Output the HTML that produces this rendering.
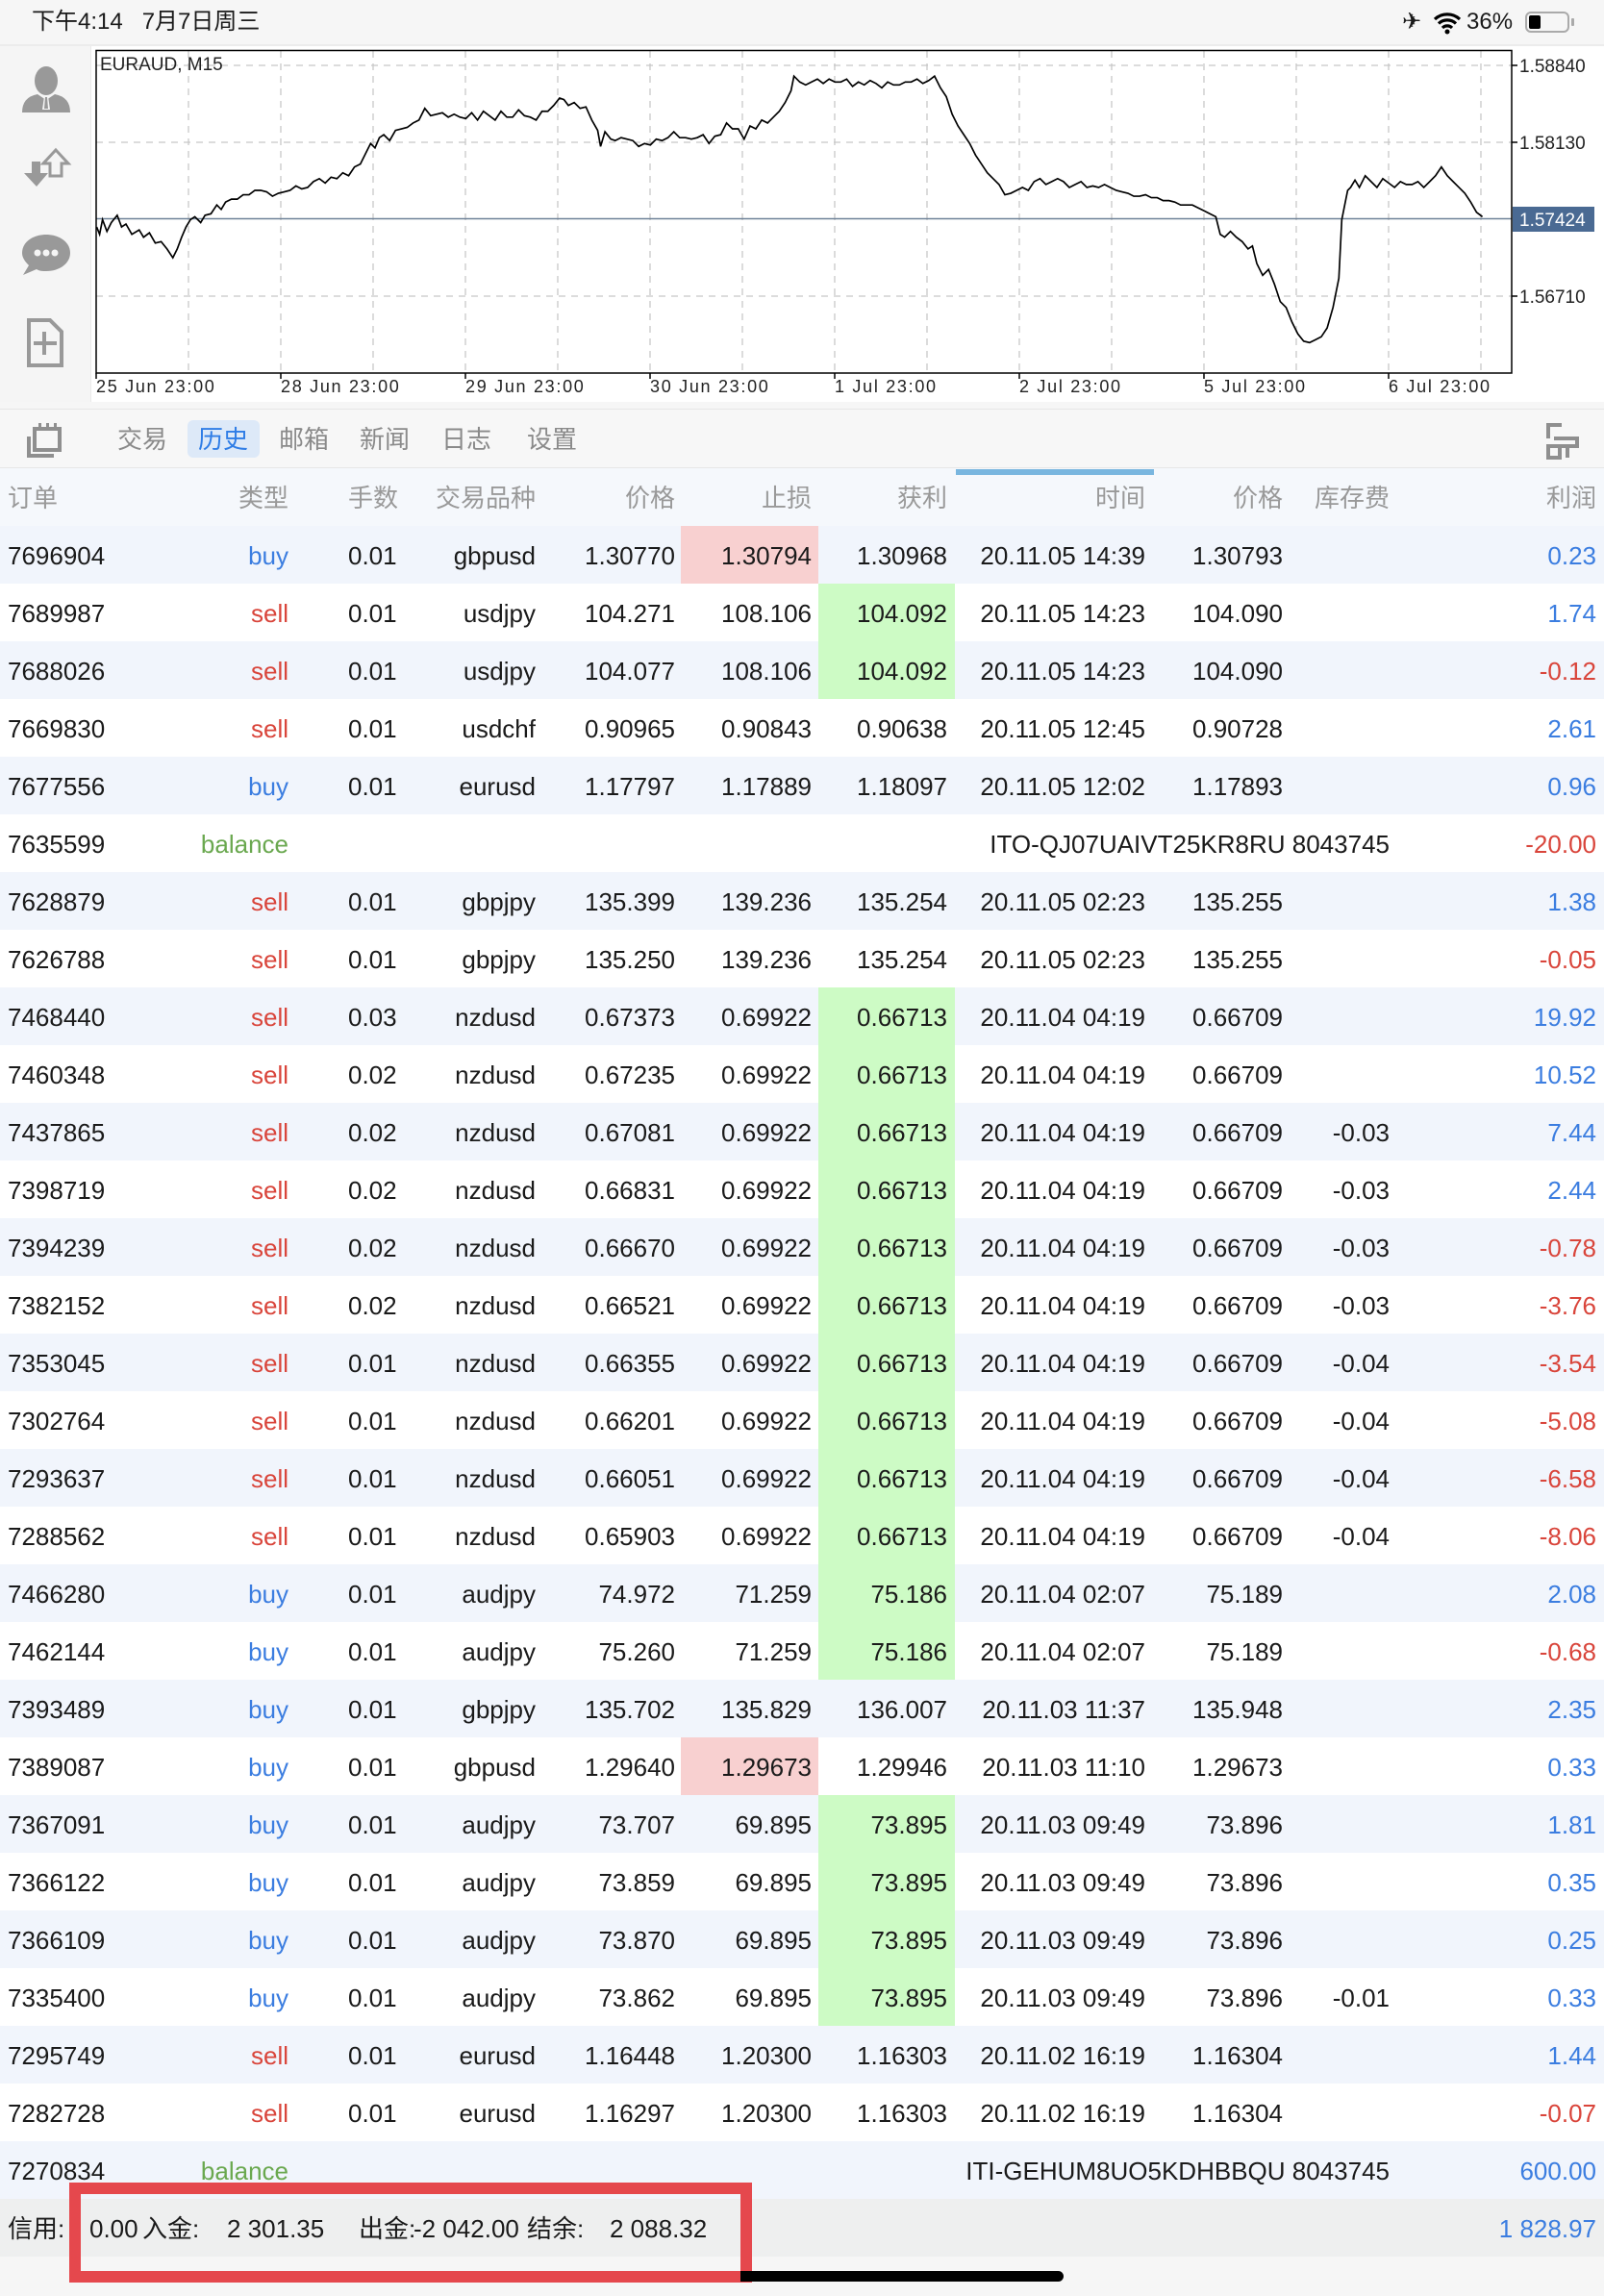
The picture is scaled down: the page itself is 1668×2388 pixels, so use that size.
<!DOCTYPE html>
<html><head><meta charset="utf-8"><style>
*{margin:0;padding:0;box-sizing:border-box}
body{width:1668px;height:2388px;position:relative;overflow:hidden;background:#f6f6f6;font-family:"Liberation Sans","Noto Sans CJK SC",sans-serif;color:#1a1a1a}
.abs{position:absolute}
#status{left:0;top:0;width:1668px;height:48px;background:#f6f6f6;border-bottom:2px solid #ececec}
#side{left:0;top:48px;width:95px;height:370px;background:#f5f5f5;border-right:1px solid #eaeaea}
#chartbg{left:95px;top:48px;width:1573px;height:370px;background:#fff}
#tabs{left:0;top:425px;width:1668px;height:62px;background:#f7f7f7;border-top:1px solid #e6e6e6;border-bottom:1px solid #e6e6e6}
.tab{position:absolute;top:14px;font-size:26px;color:#8a8a8a;line-height:34px}
#hdr{left:0;top:487px;width:1668px;height:60px;background:#f5f8fc}
.r{position:absolute;left:0;width:1668px;height:60px;font-size:26px;line-height:62px}
.r.b{background:#f1f5fc}.r.w{background:#fff}
.r i{position:absolute;font-style:normal;top:0;white-space:nowrap}
.c0{left:8px}.c1{right:1368px}.c2{left:362px}.c3{right:1111px}.c4{right:966px}.c5{right:824px}.c6{right:683px}.c7{right:477px}.c8{right:334px}.c9{right:223px}.c10{right:8px}
.buy{color:#3b7de0}.sell{color:#d9453b}.bal{color:#6aa84f}.pos{color:#3b7de0}.neg{color:#d9453b}
.hp,.hg{position:absolute;top:0;height:60px}
.hp{left:708px;width:143px;background:#f8d0d0}
.hg{left:851px;width:142px;background:#cdfbc5}
#hdr i{position:absolute;font-style:normal;font-size:26px;line-height:62px;color:#999}
</style></head><body>
<div id="status" class="abs">
<div class="abs" style="left:33px;top:8px;font-size:24px;line-height:30px">下午4:14&nbsp;&nbsp;&nbsp;7月7日周三</div>
<div class="abs" style="left:1458px;top:8px;font-size:24px;line-height:30px">✈</div>
<svg class="abs" style="left:1490px;top:12px" width="30" height="24" viewBox="0 0 30 24"><path d="M2 8a19 19 0 0 1 26 0M6 12.5a13 13 0 0 1 18 0M10 17a7 7 0 0 1 10 0" stroke="#000" stroke-width="3.2" fill="none"/><circle cx="15" cy="21" r="2.5"/></svg>
<div class="abs" style="left:1525px;top:8px;font-size:24px;line-height:30px">36%</div>
<div class="abs" style="left:1586px;top:12px;width:46px;height:22px;border:2px solid #aaa;border-radius:6px"><div style="position:absolute;left:2px;top:2px;width:12px;height:14px;background:#000;border-radius:2px"></div></div>
<div class="abs" style="left:1634px;top:19px;width:3px;height:8px;background:#aaa;border-radius:1px"></div>
</div>
<div id="side" class="abs"></div>
<div id="chartbg" class="abs"></div>
<svg class="abs" style="left:0;top:0" width="95" height="420" viewBox="0 0 95 420">
<g fill="#999">
<ellipse cx="48" cy="84" rx="12" ry="15"/><path d="M23 117q0-16 16-19l9 6 9-6q16 3 16 19z"/><path d="M46 100h4l2 14h-8z" fill="#f5f5f5"/><path d="M47 101h2l1 12h-4z"/>
<path d="M25 180h8v-12h9v12h8l-12 14z"/><path d="M58 156l13 14h-7v13h-12v-13h-7z" fill="none" stroke="#999" stroke-width="3"/>
<path d="M48 244c14 0 25 8 25 19s-11 19-25 19c-4 0-7 0-10-2l-14 6 6-10c-4-4-7-8-7-13 0-11 11-19 25-19z"/>
<path d="M30 333h22l12 12v35h-34z" fill="none" stroke="#999" stroke-width="4"/><path d="M46 345v24M35 357h24" stroke="#999" stroke-width="4"/>
</g>
<g fill="#f5f5f5"><circle cx="39" cy="263" r="3.5"/><circle cx="48" cy="263" r="3.5"/><circle cx="57" cy="263" r="3.5"/></g>
</svg>
<svg class="abs" style="left:0;top:0" width="1668" height="420" viewBox="0 0 1668 420">
<g stroke="#c8c8c8" stroke-width="1.3" stroke-dasharray="7,6">
<line x1="100" y1="68" x2="1572" y2="68"/><line x1="100" y1="148" x2="1572" y2="148"/><line x1="100" y1="308" x2="1572" y2="308"/>
<line x1="196" y1="53" x2="196" y2="388"/><line x1="292" y1="53" x2="292" y2="388"/><line x1="388" y1="53" x2="388" y2="388"/><line x1="484" y1="53" x2="484" y2="388"/><line x1="580" y1="53" x2="580" y2="388"/><line x1="676" y1="53" x2="676" y2="388"/><line x1="772" y1="53" x2="772" y2="388"/><line x1="868" y1="53" x2="868" y2="388"/><line x1="964" y1="53" x2="964" y2="388"/><line x1="1060" y1="53" x2="1060" y2="388"/><line x1="1156" y1="53" x2="1156" y2="388"/><line x1="1252" y1="53" x2="1252" y2="388"/><line x1="1348" y1="53" x2="1348" y2="388"/><line x1="1444" y1="53" x2="1444" y2="388"/><line x1="1540" y1="53" x2="1540" y2="388"/>
</g>
<line x1="100" y1="227.5" x2="1572" y2="227.5" stroke="#6f8298" stroke-width="1.5"/>
<rect x="100" y="52.5" width="1472" height="335.5" fill="none" stroke="#000" stroke-width="1.5"/>
<g stroke="#000" stroke-width="1.5"><line x1="1572" y1="68" x2="1578" y2="68"/><line x1="1572" y1="148" x2="1578" y2="148"/><line x1="1572" y1="308" x2="1578" y2="308"/>
<line x1="100" y1="388" x2="100" y2="394"/><line x1="292" y1="388" x2="292" y2="394"/><line x1="484" y1="388" x2="484" y2="394"/><line x1="676" y1="388" x2="676" y2="394"/><line x1="868" y1="388" x2="868" y2="394"/><line x1="1060" y1="388" x2="1060" y2="394"/><line x1="1252" y1="388" x2="1252" y2="394"/><line x1="1444" y1="388" x2="1444" y2="394"/></g>
<rect x="1573" y="215" width="85" height="26" fill="#4a6a93"/>
<g font-family="Liberation Sans, sans-serif" font-size="19" fill="#222">
<text x="104" y="73">EURAUD, M15</text>
<text x="1580" y="75">1.58840</text><text x="1580" y="155">1.58130</text><text x="1580" y="235" fill="#fff">1.57424</text><text x="1580" y="315">1.56710</text>
<g font-size="18" letter-spacing="1.7"><text x="100" y="408">25 Jun 23:00</text><text x="292" y="408">28 Jun 23:00</text><text x="484" y="408">29 Jun 23:00</text><text x="676" y="408">30 Jun 23:00</text><text x="868" y="408">1 Jul 23:00</text><text x="1060" y="408">2 Jul 23:00</text><text x="1252" y="408">5 Jul 23:00</text><text x="1444" y="408">6 Jul 23:00</text></g>
</g>
</svg>
<svg class="abs" style="left:0;top:0" width="1668" height="2388" viewBox="0 0 1095 1568" preserveAspectRatio="none">
<polyline fill="none" stroke="#000" stroke-width="1.1" points="66,155 68,160 70,150 73,158 76,152 80,147 83,155 86,153 90,160 95,157 98,162 102,159 106,166 110,165 114,170 118,176 121,170 124,162 127,155 130,150 133,148 137,152 140,147 144,146 148,140 151,143 154,138 158,136 162,136 166,133 170,133 174,130 178,130 182,131 186,134 190,132 194,131 198,130 202,127 206,129 210,128 214,124 218,122 222,125 226,121 230,122 234,118 238,120 242,114 246,112 250,104 253,98 256,101 259,94 262,92 266,96 270,89 274,88 278,87 282,84 286,82 290,74 294,79 298,78 302,77 306,80 310,78 314,80 318,81 322,77 326,82 330,76 334,79 338,82 342,76 346,80 350,80 354,75 358,79 362,80 366,82 370,76 374,76 378,72 382,67 385,68 388,72 392,70 396,74 400,73 404,82 408,89 410,100 413,90 417,95 420,96 424,94 428,95 432,96 436,100 440,98 444,99 448,95 452,96 456,94 460,90 464,94 468,94 472,95 476,94 480,92 484,98 488,93 492,92 496,84 500,88 504,88 508,95 512,86 516,88 520,82 524,84 528,80 532,76 536,70 540,62 542,52 546,56 550,58 554,56 558,54 562,57 566,54 570,56 574,56 578,54 582,59 586,56 590,58 594,55 598,57 602,60 606,56 610,58 614,58 618,56 622,56 626,54 630,57 634,55 638,52 642,60 646,66 650,78 654,86 658,92 662,98 666,106 670,112 674,118 678,122 682,126 686,133 690,132 694,130 698,128 702,130 706,124 710,122 714,126 718,124 722,122 726,124 730,128 734,126 738,124 742,128 746,127 750,128 754,126 758,128 762,130 766,131 770,132 774,134 778,134 782,133 786,135 790,135 794,137 798,137 802,138 806,140 810,140 814,140 818,142 822,144 826,146 830,148 833,160 836,162 840,158 844,162 848,165 852,170 855,168 858,180 862,188 866,184 870,194 874,206 878,210 882,220 886,228 890,233 894,234 898,232 902,230 906,224 910,210 914,190 916,150 918,140 920,130 922,128 925,123 928,128 932,120 936,124 940,128 944,122 948,125 952,128 956,124 960,126 964,126 968,124 972,128 976,124 980,120 984,114 988,120 992,124 996,128 1000,132 1004,138 1008,145 1012,148"/>
</svg>
<div id="tabs" class="abs">
<svg class="abs" style="left:26px;top:12px" width="44" height="40" viewBox="0 0 44 40"><g fill="none" stroke="#8f8f8f" stroke-width="4"><path d="M10 8h26v22H10z"/><path d="M4 16v20h26"/></g><g fill="#8f8f8f"><rect x="14" y="2" width="3" height="8"/><rect x="22" y="2" width="3" height="8"/><rect x="30" y="2" width="3" height="8"/></g></svg>
<div class="abs" style="left:195px;top:11px;width:75px;height:39px;background:#dde9f8;border-radius:6px"></div>
<span class="tab" style="left:122px">交易</span>
<span class="tab" style="left:206px;color:#2f7de6">历史</span>
<span class="tab" style="left:290px">邮箱</span>
<span class="tab" style="left:374px">新闻</span>
<span class="tab" style="left:459px">日志</span>
<span class="tab" style="left:548px">设置</span>
<svg class="abs" style="left:1604px;top:12px" width="40" height="40" viewBox="0 0 40 40"><g fill="none" stroke="#8f8f8f" stroke-width="4"><path d="M6 18V4h14"/><path d="M6 26h12v12H6z"/><path d="M12 18h24v8H18"/><path d="M26 26v12"/></g></svg>
</div>
<div id="hdr" class="abs">
<div class="abs" style="left:994px;top:1px;width:206px;height:6px;background:#79b6df"></div>
<i style="left:8px">订单</i><i style="right:1368px">类型</i><i style="left:362px">手数</i><i style="right:1111px">交易品种</i><i style="right:966px">价格</i><i style="right:824px">止损</i><i style="right:683px">获利</i><i style="right:477px">时间</i><i style="right:334px">价格</i><i style="right:223px">库存费</i><i style="right:8px">利润</i>
</div>
<div class="r b" style="top:547px"><span class="hp"></span><i class="c0">7696904</i><i class="c1 buy">buy</i><i class="c2">0.01</i><i class="c3">gbpusd</i><i class="c4">1.30770</i><i class="c5">1.30794</i><i class="c6">1.30968</i><i class="c7">20.11.05 14:39</i><i class="c8">1.30793</i><i class="c10 pos">0.23</i></div>
<div class="r w" style="top:607px"><span class="hg"></span><i class="c0">7689987</i><i class="c1 sell">sell</i><i class="c2">0.01</i><i class="c3">usdjpy</i><i class="c4">104.271</i><i class="c5">108.106</i><i class="c6">104.092</i><i class="c7">20.11.05 14:23</i><i class="c8">104.090</i><i class="c10 pos">1.74</i></div>
<div class="r b" style="top:667px"><span class="hg"></span><i class="c0">7688026</i><i class="c1 sell">sell</i><i class="c2">0.01</i><i class="c3">usdjpy</i><i class="c4">104.077</i><i class="c5">108.106</i><i class="c6">104.092</i><i class="c7">20.11.05 14:23</i><i class="c8">104.090</i><i class="c10 neg">-0.12</i></div>
<div class="r w" style="top:727px"><i class="c0">7669830</i><i class="c1 sell">sell</i><i class="c2">0.01</i><i class="c3">usdchf</i><i class="c4">0.90965</i><i class="c5">0.90843</i><i class="c6">0.90638</i><i class="c7">20.11.05 12:45</i><i class="c8">0.90728</i><i class="c10 pos">2.61</i></div>
<div class="r b" style="top:787px"><i class="c0">7677556</i><i class="c1 buy">buy</i><i class="c2">0.01</i><i class="c3">eurusd</i><i class="c4">1.17797</i><i class="c5">1.17889</i><i class="c6">1.18097</i><i class="c7">20.11.05 12:02</i><i class="c8">1.17893</i><i class="c10 pos">0.96</i></div>
<div class="r w" style="top:847px"><i class="c0">7635599</i><i class="c1 bal">balance</i><i class="c9">ITO-QJ07UAIVT25KR8RU 8043745</i><i class="c10 neg">-20.00</i></div>
<div class="r b" style="top:907px"><i class="c0">7628879</i><i class="c1 sell">sell</i><i class="c2">0.01</i><i class="c3">gbpjpy</i><i class="c4">135.399</i><i class="c5">139.236</i><i class="c6">135.254</i><i class="c7">20.11.05 02:23</i><i class="c8">135.255</i><i class="c10 pos">1.38</i></div>
<div class="r w" style="top:967px"><i class="c0">7626788</i><i class="c1 sell">sell</i><i class="c2">0.01</i><i class="c3">gbpjpy</i><i class="c4">135.250</i><i class="c5">139.236</i><i class="c6">135.254</i><i class="c7">20.11.05 02:23</i><i class="c8">135.255</i><i class="c10 neg">-0.05</i></div>
<div class="r b" style="top:1027px"><span class="hg"></span><i class="c0">7468440</i><i class="c1 sell">sell</i><i class="c2">0.03</i><i class="c3">nzdusd</i><i class="c4">0.67373</i><i class="c5">0.69922</i><i class="c6">0.66713</i><i class="c7">20.11.04 04:19</i><i class="c8">0.66709</i><i class="c10 pos">19.92</i></div>
<div class="r w" style="top:1087px"><span class="hg"></span><i class="c0">7460348</i><i class="c1 sell">sell</i><i class="c2">0.02</i><i class="c3">nzdusd</i><i class="c4">0.67235</i><i class="c5">0.69922</i><i class="c6">0.66713</i><i class="c7">20.11.04 04:19</i><i class="c8">0.66709</i><i class="c10 pos">10.52</i></div>
<div class="r b" style="top:1147px"><span class="hg"></span><i class="c0">7437865</i><i class="c1 sell">sell</i><i class="c2">0.02</i><i class="c3">nzdusd</i><i class="c4">0.67081</i><i class="c5">0.69922</i><i class="c6">0.66713</i><i class="c7">20.11.04 04:19</i><i class="c8">0.66709</i><i class="c9">-0.03</i><i class="c10 pos">7.44</i></div>
<div class="r w" style="top:1207px"><span class="hg"></span><i class="c0">7398719</i><i class="c1 sell">sell</i><i class="c2">0.02</i><i class="c3">nzdusd</i><i class="c4">0.66831</i><i class="c5">0.69922</i><i class="c6">0.66713</i><i class="c7">20.11.04 04:19</i><i class="c8">0.66709</i><i class="c9">-0.03</i><i class="c10 pos">2.44</i></div>
<div class="r b" style="top:1267px"><span class="hg"></span><i class="c0">7394239</i><i class="c1 sell">sell</i><i class="c2">0.02</i><i class="c3">nzdusd</i><i class="c4">0.66670</i><i class="c5">0.69922</i><i class="c6">0.66713</i><i class="c7">20.11.04 04:19</i><i class="c8">0.66709</i><i class="c9">-0.03</i><i class="c10 neg">-0.78</i></div>
<div class="r w" style="top:1327px"><span class="hg"></span><i class="c0">7382152</i><i class="c1 sell">sell</i><i class="c2">0.02</i><i class="c3">nzdusd</i><i class="c4">0.66521</i><i class="c5">0.69922</i><i class="c6">0.66713</i><i class="c7">20.11.04 04:19</i><i class="c8">0.66709</i><i class="c9">-0.03</i><i class="c10 neg">-3.76</i></div>
<div class="r b" style="top:1387px"><span class="hg"></span><i class="c0">7353045</i><i class="c1 sell">sell</i><i class="c2">0.01</i><i class="c3">nzdusd</i><i class="c4">0.66355</i><i class="c5">0.69922</i><i class="c6">0.66713</i><i class="c7">20.11.04 04:19</i><i class="c8">0.66709</i><i class="c9">-0.04</i><i class="c10 neg">-3.54</i></div>
<div class="r w" style="top:1447px"><span class="hg"></span><i class="c0">7302764</i><i class="c1 sell">sell</i><i class="c2">0.01</i><i class="c3">nzdusd</i><i class="c4">0.66201</i><i class="c5">0.69922</i><i class="c6">0.66713</i><i class="c7">20.11.04 04:19</i><i class="c8">0.66709</i><i class="c9">-0.04</i><i class="c10 neg">-5.08</i></div>
<div class="r b" style="top:1507px"><span class="hg"></span><i class="c0">7293637</i><i class="c1 sell">sell</i><i class="c2">0.01</i><i class="c3">nzdusd</i><i class="c4">0.66051</i><i class="c5">0.69922</i><i class="c6">0.66713</i><i class="c7">20.11.04 04:19</i><i class="c8">0.66709</i><i class="c9">-0.04</i><i class="c10 neg">-6.58</i></div>
<div class="r w" style="top:1567px"><span class="hg"></span><i class="c0">7288562</i><i class="c1 sell">sell</i><i class="c2">0.01</i><i class="c3">nzdusd</i><i class="c4">0.65903</i><i class="c5">0.69922</i><i class="c6">0.66713</i><i class="c7">20.11.04 04:19</i><i class="c8">0.66709</i><i class="c9">-0.04</i><i class="c10 neg">-8.06</i></div>
<div class="r b" style="top:1627px"><span class="hg"></span><i class="c0">7466280</i><i class="c1 buy">buy</i><i class="c2">0.01</i><i class="c3">audjpy</i><i class="c4">74.972</i><i class="c5">71.259</i><i class="c6">75.186</i><i class="c7">20.11.04 02:07</i><i class="c8">75.189</i><i class="c10 pos">2.08</i></div>
<div class="r w" style="top:1687px"><span class="hg"></span><i class="c0">7462144</i><i class="c1 buy">buy</i><i class="c2">0.01</i><i class="c3">audjpy</i><i class="c4">75.260</i><i class="c5">71.259</i><i class="c6">75.186</i><i class="c7">20.11.04 02:07</i><i class="c8">75.189</i><i class="c10 neg">-0.68</i></div>
<div class="r b" style="top:1747px"><i class="c0">7393489</i><i class="c1 buy">buy</i><i class="c2">0.01</i><i class="c3">gbpjpy</i><i class="c4">135.702</i><i class="c5">135.829</i><i class="c6">136.007</i><i class="c7">20.11.03 11:37</i><i class="c8">135.948</i><i class="c10 pos">2.35</i></div>
<div class="r w" style="top:1807px"><span class="hp"></span><i class="c0">7389087</i><i class="c1 buy">buy</i><i class="c2">0.01</i><i class="c3">gbpusd</i><i class="c4">1.29640</i><i class="c5">1.29673</i><i class="c6">1.29946</i><i class="c7">20.11.03 11:10</i><i class="c8">1.29673</i><i class="c10 pos">0.33</i></div>
<div class="r b" style="top:1867px"><span class="hg"></span><i class="c0">7367091</i><i class="c1 buy">buy</i><i class="c2">0.01</i><i class="c3">audjpy</i><i class="c4">73.707</i><i class="c5">69.895</i><i class="c6">73.895</i><i class="c7">20.11.03 09:49</i><i class="c8">73.896</i><i class="c10 pos">1.81</i></div>
<div class="r w" style="top:1927px"><span class="hg"></span><i class="c0">7366122</i><i class="c1 buy">buy</i><i class="c2">0.01</i><i class="c3">audjpy</i><i class="c4">73.859</i><i class="c5">69.895</i><i class="c6">73.895</i><i class="c7">20.11.03 09:49</i><i class="c8">73.896</i><i class="c10 pos">0.35</i></div>
<div class="r b" style="top:1987px"><span class="hg"></span><i class="c0">7366109</i><i class="c1 buy">buy</i><i class="c2">0.01</i><i class="c3">audjpy</i><i class="c4">73.870</i><i class="c5">69.895</i><i class="c6">73.895</i><i class="c7">20.11.03 09:49</i><i class="c8">73.896</i><i class="c10 pos">0.25</i></div>
<div class="r w" style="top:2047px"><span class="hg"></span><i class="c0">7335400</i><i class="c1 buy">buy</i><i class="c2">0.01</i><i class="c3">audjpy</i><i class="c4">73.862</i><i class="c5">69.895</i><i class="c6">73.895</i><i class="c7">20.11.03 09:49</i><i class="c8">73.896</i><i class="c9">-0.01</i><i class="c10 pos">0.33</i></div>
<div class="r b" style="top:2107px"><i class="c0">7295749</i><i class="c1 sell">sell</i><i class="c2">0.01</i><i class="c3">eurusd</i><i class="c4">1.16448</i><i class="c5">1.20300</i><i class="c6">1.16303</i><i class="c7">20.11.02 16:19</i><i class="c8">1.16304</i><i class="c10 pos">1.44</i></div>
<div class="r w" style="top:2167px"><i class="c0">7282728</i><i class="c1 sell">sell</i><i class="c2">0.01</i><i class="c3">eurusd</i><i class="c4">1.16297</i><i class="c5">1.20300</i><i class="c6">1.16303</i><i class="c7">20.11.02 16:19</i><i class="c8">1.16304</i><i class="c10 neg">-0.07</i></div>
<div class="r b" style="top:2227px"><i class="c0">7270834</i><i class="c1 bal">balance</i><i class="c9">ITI-GEHUM8UO5KDHBBQU 8043745</i><i class="c10 pos">600.00</i></div>
<div class="r" style="top:2287px;background:#eeefef"><i style="left:8px">信用:</i><i style="left:93px">0.00</i><i style="left:148px">入金:</i><i style="left:236px">2 301.35</i><i style="left:373px">出金:</i><i style="left:430px">-2 042.00</i><i style="left:548px">结余:</i><i style="left:634px">2 088.32</i><i class="c10 pos">1 828.97</i></div>
<div class="abs" style="left:72px;top:2270px;width:710px;height:104px;border:12px solid #e5484d"></div>
<div class="abs" style="left:564px;top:2362px;width:542px;height:11px;background:#000;border-radius:6px"></div>
<div class="abs" style="left:564px;top:2362px;width:206px;height:11px;background:#e5484d"></div>
</body></html>
